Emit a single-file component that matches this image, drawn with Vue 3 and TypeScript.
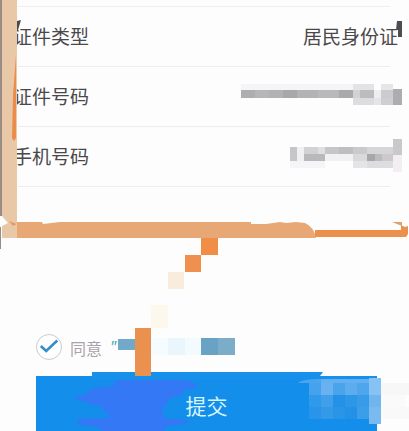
<script setup lang="ts">
import { ref } from 'vue'

type Cell = [x: number, y: number, w: number, h: number, fill: string]

interface Row {
  label: string
  value?: string
  cells?: Cell[]
}

const rows: Row[] = [
  { label: '证件类型', value: '居民身份证' },
  {
    label: '证件号码',
    cells: [
      [1, 17, 112, 6, '#f5f4f6'],
      [1, 23, 14, 8, '#aeadaf'],
      [15, 23, 14, 8, '#b7b6b8'],
      [29, 23, 14, 8, '#b2b1b3'],
      [43, 23, 14, 8, '#a8a7a9'],
      [57, 23, 21, 8, '#b3b2b4'],
      [78, 23, 21, 8, '#b9b8ba'],
      [99, 23, 14, 8, '#a9a8aa'],
      [113, 17, 21, 6, '#e3e2e4'],
      [141, 17, 12, 6, '#e6e5e7'],
      [113, 23, 7, 8, '#d2d1d3'],
      [120, 23, 14, 8, '#bcbbbd'],
      [134, 23, 7, 8, '#eeedef'],
      [141, 23, 12, 8, '#cccbcd'],
      [113, 31, 21, 7, '#dddcde'],
      [134, 31, 7, 7, '#e5e4e6'],
      [141, 31, 12, 7, '#cfced0'],
      [153, 22, 9, 16, '#adacb0'],
    ],
  },
  {
    label: '手机号码',
    cells: [
      [50, 20, 7, 14, '#c6c5c7'],
      [57, 20, 7, 14, '#f0eff1'],
      [64, 20, 14, 7, '#d2d1d3'],
      [78, 20, 7, 7, '#dfdee0'],
      [64, 27, 21, 7, '#b9b8ba'],
      [85, 20, 14, 7, '#c6c5c7'],
      [99, 20, 14, 7, '#bebdbf'],
      [113, 20, 14, 7, '#cac9cb'],
      [127, 20, 26, 7, '#d6d5d7'],
      [85, 27, 28, 7, '#f1f0f2'],
      [113, 27, 14, 7, '#d9d8da'],
      [127, 27, 8, 7, '#a7a6a8'],
      [135, 27, 7, 7, '#bcbbbd'],
      [142, 27, 11, 7, '#cac9cb'],
      [50, 34, 35, 7, '#f5f4f6'],
      [113, 34, 14, 7, '#e4e3e5'],
      [127, 34, 26, 7, '#dddcde'],
      [153, 12, 9, 16, '#c9c8ca'],
      [153, 28, 9, 17, '#f4edf1'],
    ],
  },
]

const linkCells: Cell[] = [
  [0, 5, 17, 11, '#72a9cb'],
  [33, 4, 17, 17, '#f5fcff'],
  [50, 4, 17, 17, '#eaf6fd'],
  [67, 4, 16, 17, '#f3fbff'],
  [83, 4, 17, 17, '#68a3c6'],
  [100, 4, 17, 17, '#7badc8'],
]

const trail: Cell[] = [
  [201, 238, 17, 17, '#f08e48'],
  [185, 255, 16, 17, '#ef904e'],
  [168, 272, 16, 17, '#faecdd'],
  [151, 305, 17, 23, '#fdf8ec'],
  [135, 328, 16, 48, '#eb9150'],
]

const buttonPixels: Cell[] = [
  [321, 379, 48, 4, '#65b0f1'],
  [309, 383, 12, 12, '#46a2ec'],
  [321, 383, 12, 12, '#69b1f0'],
  [333, 383, 12, 12, '#4aa4ec'],
  [345, 383, 12, 12, '#5cacee'],
  [357, 383, 12, 12, '#4ea6ed'],
  [369, 378, 12, 17, '#87c2f4'],
  [309, 395, 12, 12, '#309aea'],
  [321, 395, 12, 12, '#419fe9'],
  [333, 395, 12, 12, '#2391e7'],
  [345, 395, 12, 12, '#2c97e8'],
  [357, 395, 12, 12, '#379be9'],
  [369, 395, 12, 12, '#70b5ed'],
  [309, 407, 12, 12, '#2995ea'],
  [321, 407, 12, 12, '#3399e8'],
  [333, 407, 12, 12, '#2a95e7'],
  [345, 407, 12, 12, '#2491e7'],
  [357, 407, 12, 12, '#3c9ee9'],
  [369, 407, 12, 17, '#79baf0'],
  [381, 383, 28, 12, '#f7f7f8'],
  [381, 395, 24, 12, '#fafafa'],
  [381, 407, 28, 12, '#f9f9fa'],
]

const agreed = ref(true)
</script>

<template>
  <form class="page" @submit.prevent>
    <dl class="rows">
      <div v-for="row in rows" :key="row.label" class="row">
        <dt>{{ row.label }}</dt>
        <dd>
          <template v-if="row.value">{{ row.value }}</template>
          <svg v-else class="mask" width="158" height="59" shape-rendering="crispEdges" aria-hidden="true">
            <rect v-for="(c, i) in row.cells" :key="i" :x="c[0]" :y="c[1]" :width="c[2]" :height="c[3]" :fill="c[4]" />
          </svg>
        </dd>
      </div>
    </dl>

    <div class="consent">
      <label class="agree">
        <span class="tick">
          <input v-model="agreed" type="checkbox" />
          <svg v-if="agreed" class="check" width="26" height="26" viewBox="0 0 26 26" aria-hidden="true">
            <path d="M4.8 12 L10.2 17 L21.3 6.5" fill="none" stroke="#348fc5" stroke-width="2.6" />
          </svg>
        </span>
        <span class="caption">同意</span>
      </label>
      <a href="#" class="terms"><span class="quote">"</span>
        <svg width="118" height="26" shape-rendering="crispEdges" aria-hidden="true">
          <rect v-for="(c, i) in linkCells" :key="i" :x="c[0]" :y="c[1]" :width="c[2]" :height="c[3]" :fill="c[4]" />
        </svg>
      </a>
    </div>

    <button type="submit" class="submit">
      <svg class="stain" width="180" height="55" viewBox="0 0 180 55" aria-hidden="true">
        <path
          d="M85 0 H148 L150 5 Q160 6 161 11 Q158 14 146 13 Q150 17 143 20 Q130 22 131 29 Q122 33 128 38 Q124 42 134 43 Q152 43 152 46 Q148 49 130 50 L128 55 H66 Q66 51 44 49 Q38 46 44 43 Q62 42 72 42 Q76 38 66 35 Q72 31 54 28 Q52 26 40 24 Q36 21 50 19 Q50 13 66 11 Q84 10 78 5 Q73 2 85 0 Z"
          fill="#3478f5"
        />
      </svg>
      <span>提交</span>
    </button>

    <svg class="marks" width="409" height="431" viewBox="0 0 409 431" aria-hidden="true">
      <path d="M0 0 H17 V238 H2 V226 L8 223 L2 216 V0 Z" fill="#e9c8a8" />
      <path d="M0 0 H2 V216 H0 Z M0 227 H1 V249 H0 Z" fill="#9a8b84" />
      <path d="M16 55 V138 L14 141 L12 138 L13 95 Z" fill="#eb8c4b" />
      <path d="M17 21 L21 20 L18 30 H17 Z" fill="#4c484b" />
      <path d="M397 21 H402 V37 H398 V30 H396 Z" fill="#4e4c50" />
      <path d="M9 221 L17 224 L13 226 Z" fill="#e59a65" />
      <path d="M17 222 H42 L43 224 L60 222 H251 V224 L266 224 L280 222 L286 223 L296 222 L305 223 Q314 227 316 238 H17 Z" fill="#e7a876" />
      <path d="M315 230 H401 V225 L405 227 L408 226 V234 L406 237 H315 Z" fill="#eb914d" />
      <path d="M392 222 H402 V226 Z" fill="#dda16d" />
      <path d="M92 377 V372 H323 L320 376 H377 V380 H92 Z" fill="#1690eb" />
      <path d="M298 383 Q302 379 321 379 V383 Z" fill="#4ba5ed" />
      <g shape-rendering="crispEdges">
        <rect v-for="(c, i) in trail" :key="'t' + i" :x="c[0]" :y="c[1]" :width="c[2]" :height="c[3]" :fill="c[4]" />
        <rect v-for="(c, i) in buttonPixels" :key="'b' + i" :x="c[0]" :y="c[1]" :width="c[2]" :height="c[3]" :fill="c[4]" />
      </g>
    </svg>
  </form>
</template>

<style>
body {
  margin: 0;
  background: #fdfdfd;
}
</style>

<style scoped>
.page {
  position: relative;
  overflow: hidden;
  font-family: 'Noto Sans', 'Noto Sans CJK SC', sans-serif;
  color: #4a484b;
}

.rows {
  margin: 6px 19px 0 18px;
  border-top: 1px solid #f0eff0;
}

.row {
  display: flex;
  align-items: center;
  justify-content: space-between;
  height: 59px;
  border-bottom: 1px solid #eeedee;
  font-size: 19px;
  line-height: 26px;
}

dt {
  margin-left: -5px;
}

dd {
  margin: 0 -8px 0 0;
}

.mask {
  display: block;
  overflow: visible;
}

.consent {
  display: flex;
  align-items: center;
  margin: 147px 36px 0;
}

.agree {
  display: flex;
  align-items: center;
  gap: 8px;
  color: #aaa3ab;
  font-size: 16px;
  line-height: 22px;
}

.caption {
  padding-top: 4px;
}

.tick {
  display: grid;
}

.tick input,
.check {
  grid-area: 1 / 1;
  width: 26px;
  height: 26px;
  margin: 0;
}

.tick input {
  appearance: none;
  box-sizing: border-box;
  border: 1px solid #c9cbd2;
  border-radius: 50%;
  background: #fff;
}

.check {
  pointer-events: none;
}

.terms {
  display: flex;
  align-items: center;
  margin-left: 8px;
  color: #4aa9a5;
  font-size: 16px;
  line-height: 26px;
  text-decoration: none;
}

.quote {
  width: 8px;
  font-style: italic;
}

.submit {
  display: grid;
  align-items: center;
  justify-items: center;
  width: calc(100% - 68px);
  height: 55px;
  margin: 16px 32px 0 36px;
  padding: 0;
  border: 0;
  background: #138eea;
  color: #d9f5fa;
  font-family: inherit;
  font-size: 21px;
  line-height: 30px;
}

.submit span,
.stain {
  grid-area: 1 / 1;
}

.submit span {
  padding-top: 4px;
}

.stain {
  justify-self: start;
}

.marks {
  position: absolute;
  top: 0;
  left: 0;
  pointer-events: none;
}
</style>
